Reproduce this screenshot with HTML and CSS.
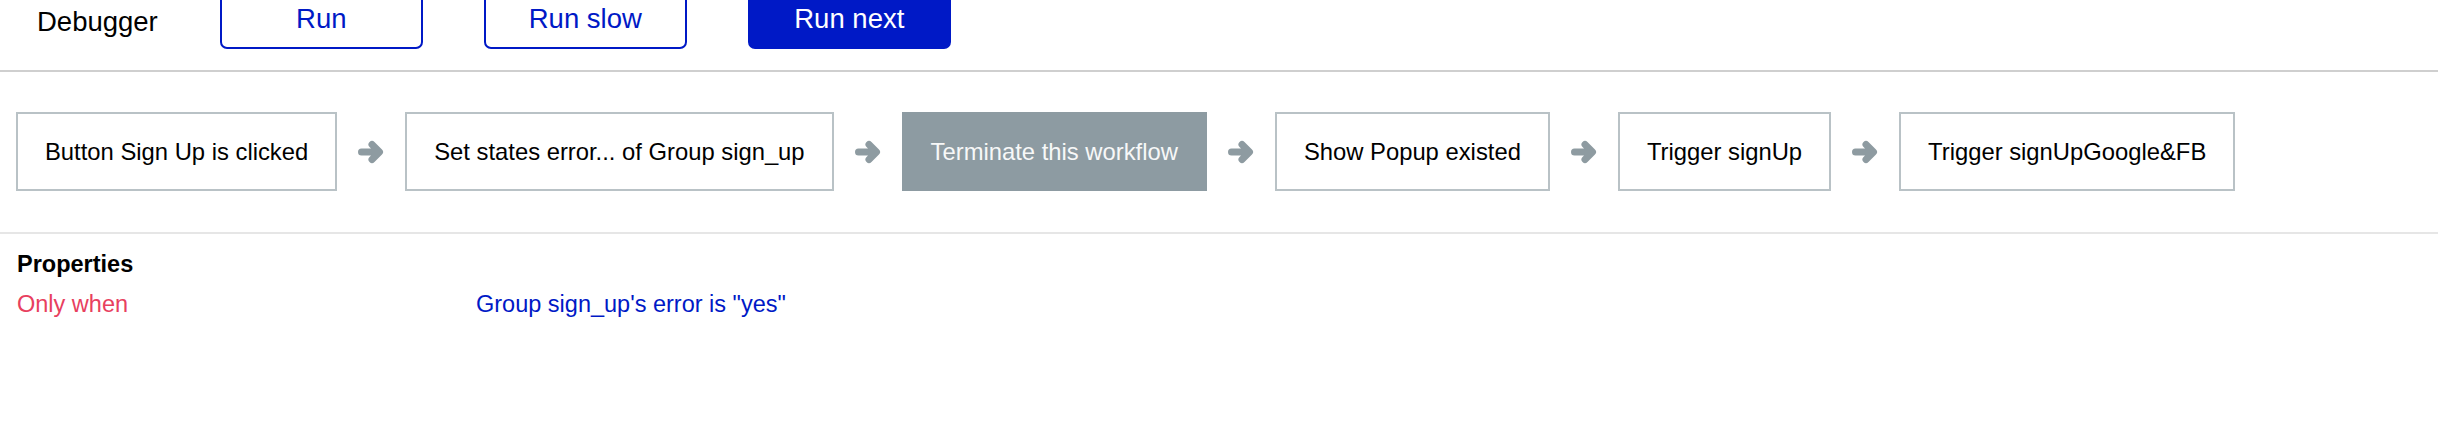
FILE: index.html
```html
<!DOCTYPE html>
<html>
<head>
<meta charset="utf-8">
<link rel="stylesheet" href="styles.css">
</head>
<body>
<header class="toolbar">
  <div class="title">Debugger</div>
  <div class="btn btn-outline">Run</div>
  <div class="btn btn-outline">Run slow</div>
  <div class="btn btn-solid">Run next</div>
</header>
<section class="flow">
  <div class="step">Button Sign Up is clicked</div>
  <svg class="arrow" viewBox="0 0 28 24"><path d="M4.5 12 H22 M15 4.5 L22.5 12 L15 19.5"/></svg>
  <div class="step">Set states error... of Group sign_up</div>
  <svg class="arrow" viewBox="0 0 28 24"><path d="M4.5 12 H22 M15 4.5 L22.5 12 L15 19.5"/></svg>
  <div class="step step-active">Terminate this workflow</div>
  <svg class="arrow" viewBox="0 0 28 24"><path d="M4.5 12 H22 M15 4.5 L22.5 12 L15 19.5"/></svg>
  <div class="step">Show Popup existed</div>
  <svg class="arrow" viewBox="0 0 28 24"><path d="M4.5 12 H22 M15 4.5 L22.5 12 L15 19.5"/></svg>
  <div class="step">Trigger signUp</div>
  <svg class="arrow" viewBox="0 0 28 24"><path d="M4.5 12 H22 M15 4.5 L22.5 12 L15 19.5"/></svg>
  <div class="step">Trigger signUpGoogle&amp;FB</div>
</section>
<section class="props">
  <div class="props-title">Properties</div>
  <div class="prop-row">
    <div class="prop-label">Only when</div>
    <div class="prop-value">Group sign_up's error is "yes"</div>
  </div>
</section>
</body>
</html>
```

FILE: styles.css
```css
html, body {
  margin: 0;
  padding: 0;
  background: #ffffff;
}

body {
  font-family: "Liberation Sans", Arial, Helvetica, sans-serif;
  color: #000;
  width: 2438px;
  height: 434px;
  overflow: hidden;
}

.toolbar {
  display: flex;
  align-items: flex-start;
  height: 70px;
  padding-left: 37px;
  gap: 61px;
  border-bottom: 2px solid #cfcfcf;
  font-size: 27.5px;
}

.title {
  margin-top: 7.7px;
  line-height: 27.5px;
  margin-right: 1px;
}

.btn {
  box-sizing: border-box;
  width: 203px;
  height: 61px;
  margin-top: -12px;
  display: flex;
  align-items: center;
  justify-content: center;
  border: 2px solid #0019c6;
  border-radius: 7px;
  line-height: 57px;
}

.btn-outline {
  color: #0019c6;
  background: #fff;
}

.btn-solid {
  color: #fff;
  background: #0019c6;
}

.flow {
  display: flex;
  align-items: center;
  gap: 20px;
  padding: 40px 0 41px 16px;
  border-bottom: 2px solid #e6e6e6;
}

.step {
  box-sizing: border-box;
  height: 79px;
  display: flex;
  align-items: center;
  padding: 0 27px;
  border: 2px solid #b9c2c6;
  font-size: 23.8px;
  white-space: nowrap;
  color: #000;
}

.step-active {
  background: #8d9ba2;
  border-color: #8d9ba2;
  color: #f7f8f8;
}

.arrow {
  width: 28px;
  height: 24px;
  flex: none;
}

.arrow path {
  fill: none;
  stroke: #8e9ba1;
  stroke-width: 7;
  stroke-linecap: round;
  stroke-linejoin: round;
}

.props {
  padding: 16px 0 0 17px;
  font-size: 23.5px;
  line-height: 28px;
}

.props-title {
  font-weight: bold;
}

.prop-row {
  display: grid;
  grid-template-columns: 459px auto;
  margin-top: 12px;
}

.prop-label {
  color: #e8405e;
}

.prop-value {
  color: #0019c6;
}
```
